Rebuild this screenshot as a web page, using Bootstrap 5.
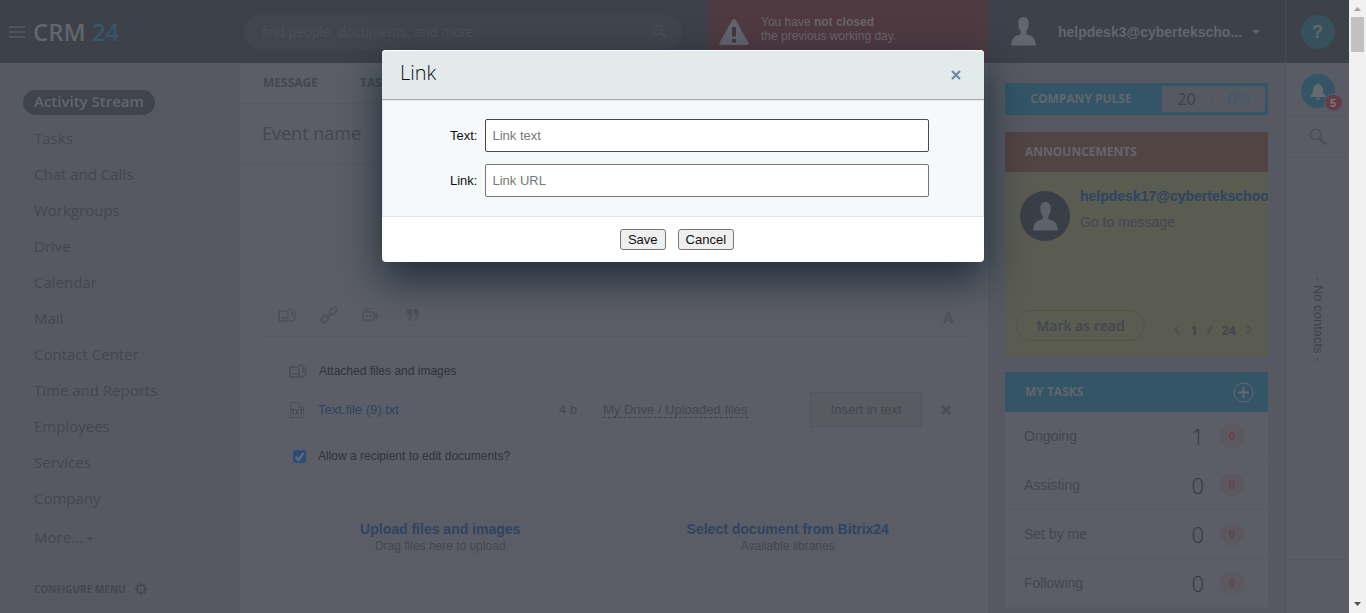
<!DOCTYPE html>
<html lang="en">
<head>
<meta charset="utf-8">
<meta name="viewport" content="width=device-width, initial-scale=1">
<title>CRM 24 – Activity Stream</title>
<link href="https://cdn.jsdelivr.net/npm/bootstrap@5.3.0/dist/css/bootstrap.min.css" rel="stylesheet">
<style>
:root{--ink:#43474f;--paper:#5b5e66;--side:#565961;--bar:#3d4149;--blue:#335565;--line:#565961}
body{font-family:"Liberation Sans",Arial,sans-serif;font-size:14px;line-height:18px;color:var(--ink);background:var(--side)}
a{color:inherit;text-decoration:none}
svg{display:block;flex:none}
.os{font-family:"Open Sans",sans-serif}
.fs12{font-size:12px}.fs13{font-size:13px}
.plain{border:0;background:none;padding:0;color:inherit}
.app{height:100vh;overflow:hidden}
/* top bar */
.topbar{height:63px;background:var(--bar);color:#62666d}
.brand-zone{width:243px;padding-left:9px}
.logo{font-size:24px;font-weight:600;line-height:34px}
.logo span{color:#345769}
.search{width:440px;height:34px;background:#41454d;border-radius:17px;padding:0 16px 0 19px;margin-right:25px;color:#4d5159}
.search input{background:none;border:0;outline:0;font-size:14px;color:inherit}
.search input::placeholder{color:#4b4f57;opacity:1}
.alarm{width:280px;background:#4f3a41;color:#6a6469;font-size:12px;line-height:14px;padding:15px 0 0 11px}
.user{padding-left:23px}
.user-name{margin-left:22px}
.help-zone{width:64px;border-left:1px solid #474b53}
.round{width:34px;height:34px;border-radius:50%;background:var(--blue)}
.help{background:#36505c;color:#64686f;font-size:18px;font-weight:700}
/* left menu */
.sidebar{width:240px;padding:21px 0 0 23px;font-size:15px}
.sidebar .item{height:36px;padding-left:11px}
.sidebar .pill{background:#40444d;color:#63666d;font-weight:600;height:25px;line-height:23px;border-radius:13px;padding:0 11px}
.more{margin-top:3px}
.conf{font-size:10px;font-weight:700;margin-top:25px;padding-left:11px}
/* feed form */
.feed{background:var(--paper)}
.tabs{height:41px;padding-left:23px;gap:42px;font-size:12px;font-weight:700;border-bottom:1px solid var(--line)}
.ev{height:60px;padding:0 0 2px 22px;font-size:18px;border-bottom:1px solid var(--line)}
.ev input{color:inherit}.ev input::placeholder{color:var(--ink);opacity:1}
.editor{height:132px;background:none;border:0;resize:none}
.tools{height:41px;margin:0 20px;padding:0 14px 2px 18px;border-bottom:1px solid var(--line);color:#4f525a}
.files{padding:25px 37px 0 49px}
.dark{color:#2f333b}
.dest{width:207px}.size{width:44px}
.dashed{border-bottom:1px dashed #3d4149}
.insert{width:112px;height:35px;background:#585b62;border:1px solid #51555d;margin-right:19px}
.tick{width:13px;height:13px;border-radius:2px;border:0;appearance:none}
.tick:checked{background:#2c4d78 url("data:image/svg+xml,%3Csvg xmlns='http://www.w3.org/2000/svg' viewBox='0 0 13 13'%3E%3Cpath d='M2.5 7l3 3 5-7' fill='none' stroke='%23686c73' stroke-width='2'/%3E%3C/svg%3E")}
.drops{display:grid;grid-template-columns:1fr 1fr;gap:11px;padding:24px 32px 0}
.drop{height:98px;background:#5a5d65;line-height:17px}
.link-ink{color:#2e4463}
/* widgets */
.widgets{width:297px;padding:20px 17px 0}
.pulse{height:32px;background:var(--blue);border-radius:2px;padding:3px;color:#62666d}
.pulse-title{padding-right:8px}
.pulse-num{width:103px;background:var(--side);border-radius:2px;font-size:16px;color:#3d4149}
.pct{color:#3a5c6c;border-left:1px solid #4a5a64}
.w-head{height:40px;padding:0 14px 0 20px;font-size:12px;font-weight:700;color:#62666d}
.ann{margin-top:17px}
.ann .w-head{background:#524442}
.ann-body{height:184px;background:#5a5b51;padding:15px 0 15px 15px}
.ava{width:50px;height:50px;border-radius:50%;background:#393e47;color:#5d6168;margin:4px 10px 0 0}
.read{width:129px;height:31px;border:1px solid #54563f;border-radius:16px;font-weight:600;margin-left:-4px}
.pager{font-weight:700;font-size:13px;gap:9px;padding-right:15px}
.faint{color:#4d4f47}
.tasks{margin-top:16px}
.tasks .w-head{background:var(--blue)}
.task{height:49px;background:var(--paper);padding:0 24px 0 19px;border-bottom:1px solid #575a62}
.count{font-size:22px;font-weight:300;color:#33373f;margin-right:16px}
.zero{width:24px;height:24px;border-radius:50%;background:#5b585f;color:#65404f;font-size:11px;font-weight:700}
/* right rail */
.rail{width:64px;border-left:1px solid #51545c;background:#595c64}
.rail .cell{border-bottom:1px solid #54575f}
.bell-cell{height:54px;padding-top:3px}.find-cell{height:41px}
.bdg{position:absolute;right:-7px;bottom:-2px;width:17px;height:15px;border-radius:8px;background:#653c43;color:#777a80;font-size:11px;box-shadow:0 0 0 1px #595c64}
.contacts{height:402px;writing-mode:vertical-rl;font-size:13px;padding-top:119px;color:#3f434b}
/* scroll track */
.track{width:17px;background:#f1f1f1;height:100vh}
.thumb{width:13px;height:35px;background:#c1c1c1}
/* link dialog */
.dlg{max-width:602px;margin:50px auto 0}
.dlg .modal-content{border:0;border-radius:4px;color:#111;background:#fff;box-shadow:0 16px 42px rgba(10,30,42,.78)}
.dlg .modal-header{height:50px;padding:0 23px 4px 18px;background:#e2eaec;border-top:1px solid #fff;border-bottom:1px solid #a9a9a9;border-radius:4px 4px 0 0}
.dlg .modal-title{font-size:20px;font-weight:300;color:#111;line-height:24px}
.dlg .modal-body{background:#f5f9fa;border:1px solid #dbe7ec;border-top-color:#e6eaea;padding:18px 54px 19px 67px;font-size:13px}
.dlg .field{height:33px;border:1px solid #767676;border-radius:2px;padding:0 6px;background:#fff;color:#222}
.dlg .field.first{border-color:#4a4a4a}
.dlg .field::placeholder{color:#777;opacity:1}
.dlg .modal-footer{border:0;height:45px;padding:0 12px 0 0;gap:12px}
.dlg .modal-footer>*{margin:0}
.native{height:21px;padding:0 7px;border:1px solid #767676;border-radius:3px;background:#efefef;color:#111;font-size:13px;line-height:17px}
</style>
</head>
<body>
<svg class="d-none" aria-hidden="true">
  <symbol id="person" viewBox="0 0 25 29"><path fill="currentColor" d="M12.500 0c3.400 0 5.300 2.400 5.200 6 0 3.300-.8 6.500-2.400 8v2.500c.4 1 2 1.300 4.200 2.200 3.600 1.500 4.500 3.300 5.500 9.800H0c1-6.500 1.900-8.300 5.500-9.800 2.200-.9 3.800-1.200 4.200-2.200V14c-1.600-1.500-2.400-4.700-2.400-8 0-3.600 1.800-6 5.200-6z"/></symbol>
  <symbol id="lens" viewBox="0 0 18 18"><g fill="none" stroke="currentColor"><circle cx="6.500" cy="6.500" r="5.300" stroke-width="1.600"/><path d="M10.500 10.500l6.500 6" stroke-width="2.400"/></g></symbol>
  <symbol id="imgclip" viewBox="0 0 18 15"><g fill="none" stroke="currentColor"><path d="M8 3H1v10h9" stroke-width="1.800"/><path d="M9.800 4v5.500a3.400 3.400 0 0 0 6.800 0V3M9.800 5V3.200a2.200 2.200 0 0 1 4.400 0V9" stroke-width="1.600"/></g><path fill="currentColor" d="M3 11l2-3 1.500 1.500 1-1L9 11z"/></symbol>
</svg>
<div class="d-flex">
<div class="app flex-grow-1 d-flex flex-column">
  <header class="topbar d-flex flex-shrink-0">
    <div class="brand-zone d-flex align-items-center gap-2">
      <button class="plain" aria-label="Menu"><svg width="16" height="12" viewBox="0 0 16 12" stroke="#4e5259" stroke-width="2"><path d="M0 1h16M0 6h16M0 11h16"/></svg></button>
      <a href="#" class="logo os">CRM <span>24</span></a>
    </div>
    <form class="search d-flex align-items-center align-self-center">
      <input class="flex-grow-1 p-0" type="text" aria-label="Search" placeholder="find people, documents, and more">
      <svg width="14" height="14"><use href="#lens"/></svg>
    </form>
    <a href="#" class="alarm d-flex">
      <svg class="mt-1" width="30" height="26" viewBox="0 0 30 26"><path fill="#62656c" d="M13.200 1.200q1.800-2.200 3.600 0L29.400 23.400q.8 2.300-1.400 2.600H2q-2.200-.3-1.400-2.600z"/><path d="M13 8h4v9.500h-4zM13 20h4v3.500h-4z" fill="#46363e"/></svg>
      <span class="ms-2 ps-1">You have <b>not closed</b><br>the previous working day.</span>
    </a>
    <div class="user d-flex align-items-center flex-grow-1">
      <svg width="25" height="29"><use href="#person"/></svg>
      <a href="#" class="user-name fw-bold">helpdesk3@cybertekscho...</a>
      <svg class="ms-2" width="12" height="6" viewBox="0 0 12 6"><path d="M2 1h8l-4 4z" fill="currentColor"/></svg>
    </div>
    <div class="help-zone d-flex align-items-center justify-content-center"><button class="plain round help" aria-label="Help">?</button></div>
  </header>

  <div class="d-flex flex-grow-1 align-items-stretch">
    <nav class="sidebar os flex-shrink-0">
      <div class="item ps-0 d-flex align-items-center"><a href="#" class="pill">Activity Stream</a></div>
      <a href="#" class="item d-flex align-items-center">Tasks</a>
      <a href="#" class="item d-flex align-items-center">Chat and Calls</a>
      <a href="#" class="item d-flex align-items-center">Workgroups</a>
      <a href="#" class="item d-flex align-items-center">Drive</a>
      <a href="#" class="item d-flex align-items-center">Calendar</a>
      <a href="#" class="item d-flex align-items-center">Mail</a>
      <a href="#" class="item d-flex align-items-center">Contact Center</a>
      <a href="#" class="item d-flex align-items-center">Time and Reports</a>
      <a href="#" class="item d-flex align-items-center">Employees</a>
      <a href="#" class="item d-flex align-items-center">Services</a>
      <a href="#" class="item d-flex align-items-center">Company</a>
      <a href="#" class="item more d-flex align-items-center">More...<svg class="ms-1 mt-1" width="6" height="4" viewBox="0 0 6 4"><path d="M0 .5h6l-3 3z" fill="currentColor"/></svg></a>
      <a href="#" class="conf d-flex align-items-center">CONFIGURE MENU
        <svg class="ms-2" width="14" height="14" viewBox="0 0 14 14" fill="none" stroke="currentColor"><circle cx="7" cy="7" r="4" stroke-width="1.500"/><path stroke-width="1.800" d="M7 1v2M7 11v2M1 7h2M11 7h2M2.800 2.800l1.400 1.400M9.800 9.800l1.400 1.400M2.800 11.200l1.400-1.400M9.800 4.200l1.400-1.400"/></svg></a>
    </nav>

    <main class="feed flex-grow-1 d-flex flex-column">
      <div class="tabs os d-flex align-items-center"><a href="#">MESSAGE</a><a href="#">TASK</a></div>
      <div class="ev os d-flex align-items-center"><input class="plain flex-grow-1" type="text" aria-label="Event name" placeholder="Event name"></div>
      <textarea class="editor w-100" aria-label="Message"></textarea>
      <div class="tools d-flex align-items-center">
        <button class="plain" aria-label="Attach"><svg width="18" height="15"><use href="#imgclip"/></svg></button>
        <button class="plain ms-4" aria-label="Link"><svg width="18" height="18" viewBox="0 0 18 18" fill="none" stroke="currentColor" stroke-width="2"><rect x="9" y="2.500" width="8" height="5" rx="2.500" transform="rotate(-45 13 5)"/><rect x="1" y="10.500" width="8" height="5" rx="2.500" transform="rotate(-45 5 13)"/><path d="M6.500 11.500l5-5"/></svg></button>
        <button class="plain ms-4" aria-label="Video"><svg width="17" height="14" viewBox="0 0 17 14"><path d="M2 2.500Q3 .8 5 .8h5" fill="none" stroke="currentColor" stroke-width="1.500"/><rect x="1" y="4" width="11" height="8.500" rx="2" fill="none" stroke="currentColor" stroke-width="1.800"/><path d="M12 7l4-3v8l-4-3zM4 7h2v2H4zM7.500 7h2v2h-2z" fill="currentColor"/></svg></button>
        <button class="plain ms-4 ps-1" aria-label="Quote"><svg width="12" height="12" viewBox="0 0 12 12" fill="currentColor"><path d="M0 0h5v6q0 4-3.500 6L.5 10.500Q2.500 9 2.500 6H0zM6.500 0h5v6q0 4-3.500 6L7 10.500Q9 9 9 6H6.500z"/></svg></button>
        <button class="plain ms-auto pt-2 fw-bold fs-6" aria-label="Text format">A</button>
      </div>
      <div class="files">
        <div class="d-flex align-items-center fs12 dark mb-2 pb-1"><svg width="18" height="15" class="me-2" color="#4b4f57"><use href="#imgclip"/></svg><span class="ms-1">Attached files and images</span></div>
        <div class="d-flex align-items-center fs13">
          <svg class="me-2" width="17" height="16" viewBox="0 0 17 16" fill="none" stroke="#4c5058"><path d="M1.500 15.500V.5h8l5 5v10zM9.500.5v5h5"/><path stroke="#41454d" d="M2 7.500h4M4 7.500v5M6.500 7.500l3 5M9.500 7.500l-3 5M10.500 7.500h4M12.500 7.500v5"/></svg>
          <a href="#" class="link-ink flex-grow-1 ms-1">Text.file (9).txt</a>
          <span class="size">4 b</span>
          <span class="dest"><a href="#" class="dashed">My Drive / Uploaded files</a></span>
          <button class="plain insert">Insert in text</button>
          <button class="plain" aria-label="Remove"><svg width="10" height="10" viewBox="0 0 10 10"><path d="M1 1l8 8M9 1L1 9" stroke="#4a4e56" stroke-width="2.600"/></svg></button>
        </div>
        <div class="d-flex align-items-center fs12 dark mt-3 pt-1 ps-1"><input class="tick m-0" id="allow" type="checkbox" checked><label class="ms-2 ps-1" for="allow">Allow a recipient to edit documents?</label></div>
      </div>
      <div class="drops">
        <a href="#" class="drop d-flex flex-column align-items-center justify-content-center"><b class="link-ink">Upload files and images</b><span class="fs12">Drag files here to upload</span></a>
        <a href="#" class="drop d-flex flex-column align-items-center justify-content-center"><b class="link-ink">Select document from Bitrix24</b><span class="fs12">Available libraries</span></a>
        <div class="drop"></div><div class="drop"></div>
      </div>
    </main>

    <aside class="widgets flex-shrink-0">
      <section class="pulse os d-flex">
        <b class="pulse-title flex-grow-1 text-center align-self-center fs12">COMPANY PULSE</b>
        <div class="pulse-num d-flex align-items-center text-center"><span class="flex-fill">20</span><span class="pct flex-fill">0%</span></div>
      </section>
      <section class="ann">
        <h2 class="w-head os m-0 d-flex align-items-center">ANNOUNCEMENTS</h2>
        <div class="ann-body d-flex flex-column">
          <div class="d-flex overflow-hidden">
            <div class="ava flex-shrink-0 d-flex align-items-center justify-content-center"><svg width="25" height="29"><use href="#person"/></svg></div>
            <div><a href="#" class="link-ink fw-bold text-nowrap">helpdesk17@cybertekschoo</a><br><a href="#" class="d-inline-block mt-2">Go to message</a></div>
          </div>
          <div class="d-flex align-items-center mt-auto os">
            <button class="plain read">Mark as read</button>
            <div class="pager d-flex align-items-center ms-auto pt-2">
              <svg width="8" height="11" viewBox="0 0 8 11" fill="none" stroke="#4d4f47" stroke-width="1.600"><path d="M6.500 1L2 5.500 6.500 10"/></svg><span>1</span><span class="faint">/</span><span>24</span><svg width="8" height="11" viewBox="0 0 8 11" fill="none" stroke="#4d4f47" stroke-width="1.600"><path d="M1.500 1L6 5.500 1.500 10"/></svg>
            </div>
          </div>
        </div>
      </section>
      <section class="tasks">
        <h2 class="w-head os m-0 d-flex align-items-center justify-content-between">MY TASKS
          <svg width="21" height="21" viewBox="0 0 21 21" fill="none" stroke="#656970"><circle cx="10.500" cy="10.500" r="9.500"/><path stroke-width="2" d="M10.500 5v11M5 10.500h11"/></svg></h2>
        <a href="#" class="task d-flex align-items-center"><span class="flex-grow-1">Ongoing</span><span class="count os">1</span><span class="zero d-flex align-items-center justify-content-center">0</span></a>
        <a href="#" class="task d-flex align-items-center"><span class="flex-grow-1">Assisting</span><span class="count os">0</span><span class="zero d-flex align-items-center justify-content-center">0</span></a>
        <a href="#" class="task d-flex align-items-center"><span class="flex-grow-1">Set by me</span><span class="count os">0</span><span class="zero d-flex align-items-center justify-content-center">0</span></a>
        <a href="#" class="task d-flex align-items-center"><span class="flex-grow-1">Following</span><span class="count os">0</span><span class="zero d-flex align-items-center justify-content-center">0</span></a>
      </section>
    </aside>

    <aside class="rail flex-shrink-0">
      <div class="cell bell-cell d-flex align-items-center justify-content-center">
        <button class="plain round position-relative d-flex align-items-center justify-content-center" aria-label="Notifications">
          <svg width="16" height="17" viewBox="0 0 16 17" fill="#656970"><path d="M8 0q1.500 0 1.500 1.700Q13 3 13 7q0 4 2.500 5.500V14H.5v-1.500Q3 11 3 7q0-4 3.500-5.300Q6.500 0 8 0zM5.500 14.800h5Q9.500 17 8 17t-2.500-2.200z"/></svg>
          <b class="bdg d-flex align-items-center justify-content-center">5</b>
        </button>
      </div>
      <div class="cell find-cell d-flex align-items-center justify-content-center"><svg width="18" height="18" color="#4b4e56"><use href="#lens"/></svg></div>
      <div class="cell contacts w-100 d-flex align-items-center">- No contacts -</div>
    </aside>
  </div>
</div>
<div class="track flex-shrink-0 d-flex flex-column align-items-center justify-content-between" aria-hidden="true">
  <div><svg class="mx-auto" width="7" height="17" viewBox="0 0 7 17"><path d="M0 11l3.500-4L7 11z" fill="#a3a3a3"/></svg><div class="thumb"></div></div>
  <svg width="7" height="17" viewBox="0 0 7 17"><path d="M0 6h7l-3.500 4z" fill="#505050"/></svg>
</div>
</div>

<div class="modal d-block" role="dialog" aria-labelledby="dlgTitle">
  <form class="modal-dialog dlg">
    <div class="modal-content">
      <div class="modal-header d-flex align-items-center">
        <h1 class="modal-title os" id="dlgTitle">Link</h1>
        <button type="button" class="plain pt-1" aria-label="Close"><svg width="10" height="10" viewBox="0 0 10 10"><path d="M1 1l8 8M9 1L1 9" stroke="#7385a5" stroke-width="2.200"/></svg></button>
      </div>
      <div class="modal-body">
        <div class="d-flex align-items-center mb-2 pb-1"><label for="t" class="pe-2 flex-shrink-0">Text:</label><input class="field first flex-grow-1" id="t" type="text" placeholder="Link text"></div>
        <div class="d-flex align-items-center"><label for="u" class="pe-2 flex-shrink-0">Link:</label><input class="field flex-grow-1" id="u" type="text" placeholder="Link URL"></div>
      </div>
      <div class="modal-footer d-flex align-items-center justify-content-center">
        <button type="button" class="native">Save</button><button type="button" class="native">Cancel</button>
      </div>
    </div>
  </form>
</div>
<script src="https://cdn.jsdelivr.net/npm/bootstrap@5.3.0/dist/js/bootstrap.bundle.min.js"></script>
</body>
</html>
